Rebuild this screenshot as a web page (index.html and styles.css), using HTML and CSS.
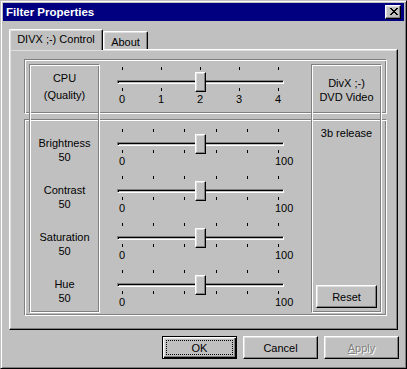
FILE: index.html
```html
<!DOCTYPE html>
<html>
<head>
<meta charset="utf-8">
<title>Filter Properties</title>
<link rel="stylesheet" href="styles.css">
</head>
<body>
<div class="window">
  <div class="titlebar">
    <span class="title">Filter Properties</span>
    <span class="close"><svg width="8" height="7" viewBox="0 0 8 7" shape-rendering="crispEdges"><path d="M0 0h2v1H0zM6 0h2v1H6zM1 1h2v1H1zM5 1h2v1H5zM2 2h4v1H2zM3 3h2v1H3zM2 4h4v1H2zM1 5h2v1H1zM5 5h2v1H5zM0 6h2v1H0zM6 6h2v1H6z" fill="#000"/></svg></span>
  </div>
  <div class="client">
    <div class="tabs">
      <div class="tab active">DIVX ;-) Control</div>
      <div class="tab">About</div>
    </div>
    <div class="panel">
      <div class="layout">
        <div class="group g1"></div>
        <div class="group g2"></div>
        <div class="frame fl"></div>
        <div class="frame fr"></div>

        <div class="cpu-label">CPU<br>(Quality)</div>
        <div class="cpu-slider">
          <div class="slider">
            <div class="ticks"><i></i><i></i><i></i><i></i><i></i></div>
            <div class="channel"></div>
            <div class="ticks bottom"><i></i><i></i><i></i><i></i><i></i></div>
            <div class="scale"><span>0</span><span>1</span><span>2</span><span>3</span><span>4</span></div>
            <div class="thumb"></div>
          </div>
        </div>
        <div class="version">DivX ;-)<br>DVD Video</div>

        <div class="labels">
          <div class="lbl">Brightness<br>50</div>
          <div class="lbl">Contrast<br>50</div>
          <div class="lbl">Saturation<br>50</div>
          <div class="lbl">Hue<br>50</div>
        </div>
        <div class="sliders">
          <div class="slider">
            <div class="ticks"><i></i><i></i><i></i><i></i><i></i><i></i></div>
            <div class="channel"></div>
            <div class="ticks bottom"><i></i><i></i><i></i><i></i><i></i><i></i></div>
            <div class="scale"><span>0</span><span>100</span></div>
            <div class="thumb"></div>
          </div>
          <div class="slider">
            <div class="ticks"><i></i><i></i><i></i><i></i><i></i><i></i></div>
            <div class="channel"></div>
            <div class="ticks bottom"><i></i><i></i><i></i><i></i><i></i><i></i></div>
            <div class="scale"><span>0</span><span>100</span></div>
            <div class="thumb"></div>
          </div>
          <div class="slider">
            <div class="ticks"><i></i><i></i><i></i><i></i><i></i><i></i></div>
            <div class="channel"></div>
            <div class="ticks bottom"><i></i><i></i><i></i><i></i><i></i><i></i></div>
            <div class="scale"><span>0</span><span>100</span></div>
            <div class="thumb"></div>
          </div>
          <div class="slider">
            <div class="ticks"><i></i><i></i><i></i><i></i><i></i><i></i></div>
            <div class="channel"></div>
            <div class="ticks bottom"><i></i><i></i><i></i><i></i><i></i><i></i></div>
            <div class="scale"><span>0</span><span>100</span></div>
            <div class="thumb"></div>
          </div>
        </div>
        <div class="side">
          <div class="release">3b release</div>
          <div class="btn reset">Reset</div>
        </div>
      </div>
    </div>
    <div class="buttons">
      <div class="btn default">OK</div>
      <div class="btn">Cancel</div>
      <div class="btn disabled"><span><u>A</u>pply</span></div>
    </div>
  </div>
</div>
</body>
</html>
```

FILE: styles.css
```css
* { box-sizing: border-box; }
html, body { margin: 0; padding: 0; }
body {
  background: #c0c0c0;
  font-family: "Liberation Sans", Arial, sans-serif;
  font-size: 11px;
  color: #000;
}

.window {
  width: 407px;
  height: 369px;
  border: 1px solid;
  border-color: #c0c0c0 #000 #000 #c0c0c0;
  box-shadow: inset 1px 1px #fff, inset -1px -1px #808080;
  padding: 2px;
  background: #c0c0c0;
}

.titlebar {
  height: 18px;
  background: #000080;
  color: #fff;
  display: flex;
  align-items: center;
  justify-content: space-between;
  padding: 0 3px;
}
.title { font-weight: bold; font-size: 11.5px; }
.close {
  display: block;
  width: 16px;
  height: 14px;
  background: #c0c0c0;
  border: 1px solid;
  border-color: #fff #000 #000 #fff;
  box-shadow: inset -1px -1px #808080, inset 1px 1px #dfdfdf;
  padding: 2px 0 0 4px;
}
.close svg { display: block; }

.client { padding: 0 6px; }

.tabs {
  margin-top: 10px;
  height: 18px;
  display: flex;
  align-items: flex-end;
}
.tab {
  position: relative;
  height: 18px;
  border: 1px solid;
  border-bottom: none;
  border-color: #fff #000 #000 #fff;
  border-radius: 2px 2px 0 0;
  box-shadow: inset -1px 0 #808080, inset 1px 1px #dfdfdf;
  background: #c0c0c0;
  text-align: center;
  line-height: 14px;
  padding-top: 3px;
  width: 45px;
}
.tab.active {
  z-index: 1;
  width: 94px;
  height: 21px;
  margin-bottom: -1px;
  padding-top: 2px;
}

.panel {
  height: 281px;
  border: 1px solid;
  border-color: #fff #000 #000 #fff;
  box-shadow: inset -1px -1px #808080, inset 1px 1px #dfdfdf;
  padding: 9px 10px 0 14px;
}

.layout {
  display: grid;
  grid-template-columns: 5px 71px 1fr 71px 5px;
  grid-template-rows: 5px 50px 5px 194px 3px;
}

.group, .frame {
  border: 1px solid;
  border-color: #808080 #fff #fff #808080;
  box-shadow: inset 1px 1px #fff, inset -1px -1px #808080;
}
.g1 { grid-row: 1 / 3; grid-column: 1 / -1; }
.g2 { grid-row: 4 / 6; grid-column: 1 / -1; }
.fl { grid-row: 2 / 5; grid-column: 2; }
.fr { grid-row: 2 / 5; grid-column: 4; }

.cpu-label {
  grid-row: 2; grid-column: 2;
  text-align: center;
  line-height: 17px;
  padding-top: 6px;
}
.version {
  grid-row: 2; grid-column: 4;
  text-align: center;
  line-height: 14px;
  padding-top: 12px;
}
.cpu-slider {
  grid-row: 2; grid-column: 3;
  padding-top: 3px;
}
.labels {
  grid-row: 4; grid-column: 2;
  padding-top: 17px;
}
.lbl {
  height: 47px;
  text-align: center;
  line-height: 14px;
}
.sliders {
  grid-row: 4; grid-column: 3;
  padding-top: 10px;
}
.sliders .slider { height: 47px; }
.side {
  grid-row: 4; grid-column: 4;
  display: flex;
  flex-direction: column;
  justify-content: space-between;
  align-items: center;
  padding: 7px 5px 5px;
}
.release { line-height: 14px; }

.slider {
  position: relative;
  width: 167px;
  margin-left: 17px;
}
.ticks {
  display: flex;
  justify-content: space-between;
  margin: 0 5px;
  height: 3px;
}
.ticks i { width: 1px; background: #000; }
.ticks.bottom { margin-top: 4px; }
.channel {
  margin-top: 10px;
  height: 4px;
  border: 1px solid;
  border-color: #808080 #fff #fff #808080;
  box-shadow: inset 1px 1px #000;
}
.scale {
  display: flex;
  justify-content: space-between;
  margin: 1px 1px 0 2px;
  height: 14px;
  line-height: 14px;
}
.scale span { width: 8px; white-space: nowrap; }
.thumb {
  position: absolute;
  left: 78px;
  top: 5px;
  width: 11px;
  height: 20px;
  background: #c0c0c0;
  border: 1px solid;
  border-color: #fff #000 #000 #fff;
  box-shadow: inset -1px -1px #808080, inset 1px 1px #dfdfdf;
}

.btn {
  width: 75px;
  height: 23px;
  border: 1px solid;
  border-color: #fff #000 #000 #fff;
  box-shadow: inset -1px -1px #808080, inset 1px 1px #dfdfdf;
  background: #c0c0c0;
  display: flex;
  align-items: center;
  justify-content: center;
}
.btn.reset { width: 61px; }
.btn.default {
  position: relative;
  border-color: #000;
  box-shadow: inset 1px 1px #fff, inset -1px -1px #000, inset -2px -2px #808080, inset 2px 2px #dfdfdf;
}
.btn.default::after {
  content: "";
  position: absolute;
  left: 3px; top: 3px; right: 3px; bottom: 3px;
  border: 1px dotted #000;
}
.btn.disabled { color: #808080; text-shadow: 1px 1px #fff; }

.buttons {
  display: flex;
  justify-content: flex-end;
  gap: 6px;
  margin-top: 6px;
  margin-right: -1px;
}
```
